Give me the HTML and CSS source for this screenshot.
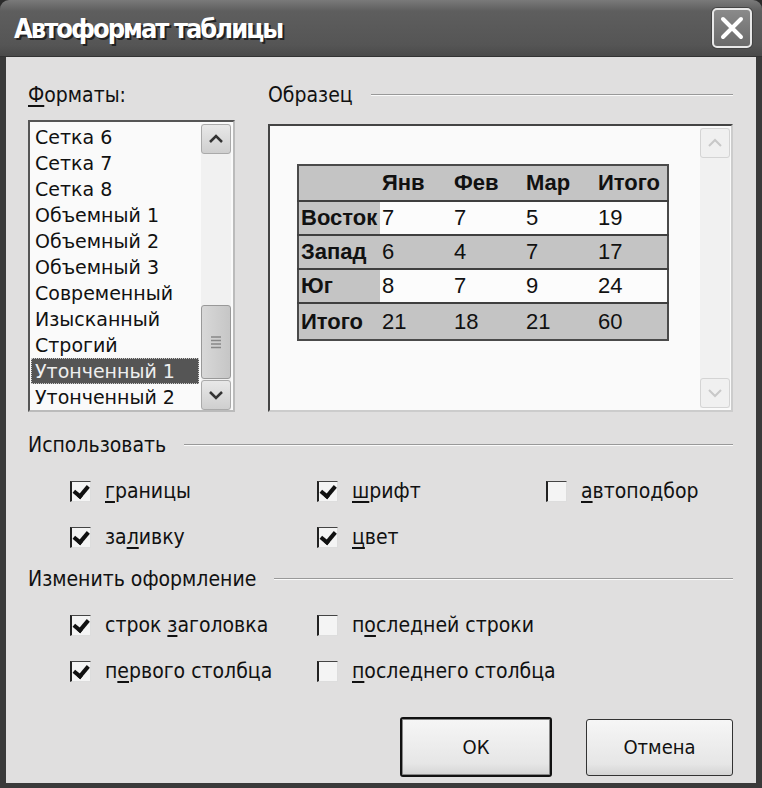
FILE: index.html
```html
<!DOCTYPE html>
<html lang="ru">
<head>
    <meta charset="UTF-8">
    <title>Автоформат таблицы</title>
    <link rel="stylesheet" href="styles.css">
</head>
<body>
    <div class="window">
        <div class="titlebar">
            <span class="title">Автоформат таблицы</span>
            <div class="close">
                <svg width="26" height="26" viewBox="0 0 26 26"><path d="M4 4 L22 22 M22 4 L4 22" stroke="#fff" stroke-width="4" stroke-linecap="round"/></svg>
            </div>
        </div>

        <div class="client">
            <div class="top">
                <div class="formats">
                    <div class="label"><u>Ф</u>орматы:</div>
                    <div class="listbox">
                        <ul class="items">
                            <li>Сетка 6</li>
                            <li>Сетка 7</li>
                            <li>Сетка 8</li>
                            <li>Объемный 1</li>
                            <li>Объемный 2</li>
                            <li>Объемный 3</li>
                            <li>Современный</li>
                            <li>Изысканный</li>
                            <li>Строгий</li>
                            <li class="selected">Утонченный 1</li>
                            <li>Утонченный 2</li>
                        </ul>
                        <div class="scrollbar">
                            <div class="arrow">
                                <svg width="26" height="26" viewBox="0 0 26 26"><path d="M7 16 L13 10 L19 16" fill="none" stroke="#333" stroke-width="2.5"/></svg>
                            </div>
                            <div class="track">
                                <div class="thumb">
                                    <svg width="12" height="14" viewBox="0 0 12 14"><path d="M1 2 H11 M1 5.5 H11 M1 9 H11 M1 12.5 H11" stroke="#888" stroke-width="1.5"/></svg>
                                </div>
                            </div>
                            <div class="arrow">
                                <svg width="26" height="26" viewBox="0 0 26 26"><path d="M7 10 L13 16 L19 10" fill="none" stroke="#333" stroke-width="2.5"/></svg>
                            </div>
                        </div>
                    </div>
                </div>

                <div class="sample">
                    <div class="legend"><span>Образец</span><div class="rule"></div></div>
                    <div class="preview">
                        <div class="preview-area">
                            <table class="demo">
                                <tr class="head"><td></td><td>Янв</td><td>Фев</td><td>Мар</td><td>Итого</td></tr>
                                <tr class="light"><td>Восток</td><td>7</td><td>7</td><td>5</td><td>19</td></tr>
                                <tr class="dark"><td>Запад</td><td>6</td><td>4</td><td>7</td><td>17</td></tr>
                                <tr class="light"><td>Юг</td><td>8</td><td>7</td><td>9</td><td>24</td></tr>
                                <tr class="dark total"><td>Итого</td><td>21</td><td>18</td><td>21</td><td>60</td></tr>
                            </table>
                        </div>
                        <div class="scrollbar disabled">
                            <div class="arrow">
                                <svg width="26" height="26" viewBox="0 0 26 26"><path d="M7 16 L13 10 L19 16" fill="none" stroke="#c8c8c8" stroke-width="2"/></svg>
                            </div>
                            <div class="track"></div>
                            <div class="arrow">
                                <svg width="26" height="26" viewBox="0 0 26 26"><path d="M7 10 L13 16 L19 10" fill="none" stroke="#c8c8c8" stroke-width="2"/></svg>
                            </div>
                        </div>
                    </div>
                </div>
            </div>

            <div class="group">
                <div class="legend"><span>Использовать</span><div class="rule"></div></div>
                <div class="checks three">
                    <label class="check"><span class="box on"></span><span><u>г</u>раницы</span></label>
                    <label class="check"><span class="box on"></span><span><u>ш</u>рифт</span></label>
                    <label class="check"><span class="box"></span><span><u>а</u>втоподбор</span></label>
                    <label class="check"><span class="box on"></span><span>за<u>л</u>ивку</span></label>
                    <label class="check"><span class="box on"></span><span><u>ц</u>вет</span></label>
                </div>
            </div>

            <div class="group">
                <div class="legend"><span>Изменить оформление</span><div class="rule"></div></div>
                <div class="checks two">
                    <label class="check"><span class="box on"></span><span>строк <u>з</u>аголовка</span></label>
                    <label class="check"><span class="box"></span><span>п<u>о</u>следней строки</span></label>
                    <label class="check"><span class="box on"></span><span>п<u>е</u>рвого столбца</span></label>
                    <label class="check"><span class="box"></span><span><u>п</u>оследнего столбца</span></label>
                </div>
            </div>

            <div class="buttons">
                <button class="btn default">ОК</button>
                <button class="btn">Отмена</button>
            </div>
        </div>
    </div>
</body>
</html>
```

FILE: styles.css
```css
/* Global reset */
* {
    margin: 0;
    padding: 0;
    box-sizing: border-box;
}

body {
    background: #2b2b2b;
    font-family: "DejaVu Sans Condensed", "DejaVu Sans", sans-serif;
    color: #111;
}

/* Window frame */
.window {
    width: 762px;
    height: 788px;
    display: flex;
    flex-direction: column;
}

.titlebar {
    height: 57px;
    background: linear-gradient(#7a7a7a, #5e5e5e 20%, #555 80%, #4a4a4a);
    border-radius: 9px 9px 0 0;
    border-bottom: 1px solid #333;
    display: flex;
    align-items: center;
    justify-content: space-between;
    padding: 0 10px 0 14px;
}

.title {
    font-family: "DejaVu Sans Condensed", "DejaVu Sans", sans-serif;
    font-weight: bold;
    font-size: 27px;
    color: #fff;
    text-shadow: 2px 2px 0 #222;
    letter-spacing: -2px;
}

.close {
    width: 40px;
    height: 40px;
    border: 2px solid #e8e8e8;
    border-radius: 5px;
    background: linear-gradient(#8a8a8a, #6a6a6a);
    display: flex;
    align-items: center;
    justify-content: center;
    box-shadow: 0 0 0 1px #444;
}

.client {
    flex: 1;
    background: #e0dfdf;
    border-left: 6px solid #3a3a3a;
    border-right: 6px solid #3a3a3a;
    border-bottom: 5px solid #3a3a3a;
    padding: 26px 23px 0 22px;
    font-size: 21px;
}

u {
    text-decoration-thickness: 2px;
    text-underline-offset: 3px;
}

/* Top area */
.top {
    display: grid;
    grid-template-columns: 207px 465px;
    column-gap: 33px;
}

.label {
    height: 24px;
    line-height: 24px;
}

.legend {
    display: flex;
    align-items: center;
    height: 24px;
    line-height: 24px;
}

.legend .rule {
    flex: 1;
    height: 2px;
    margin-left: 18px;
    border-top: 1px solid #999;
    border-bottom: 1px solid #fafafa;
}

/* Formats listbox */
.listbox {
    margin-top: 13px;
    height: 292px;
    background: #fafafa;
    border: 2px solid #555;
    border-right-color: #bbb;
    border-bottom-color: #bbb;
    display: flex;
    padding: 2px 2px 0 1px;
}

.items {
    list-style: none;
    flex: 1;
    font-family: "DejaVu Sans", sans-serif;
    font-size: 19px;
}

.items li {
    height: 26px;
    line-height: 26px;
    padding-left: 4px;
    white-space: nowrap;
}

.items li.selected {
    background: #555;
    color: #eee;
    outline: 1px dotted #ccc;
    outline-offset: -1px;
    margin-right: 2px;
}

.scrollbar {
    width: 30px;
    display: flex;
    flex-direction: column;
    background: #f1f1f1;
}

.scrollbar .arrow {
    height: 30px;
    border: 1px solid #aaa;
    border-radius: 3px;
    background: linear-gradient(#e8e8e8, #cfcfcf);
    display: flex;
    align-items: center;
    justify-content: center;
}

.scrollbar .track {
    flex: 1;
    display: flex;
    flex-direction: column;
    justify-content: flex-end;
    padding: 1px 0;
}

.thumb {
    height: 74px;
    border: 1px solid #999;
    border-radius: 3px;
    background: linear-gradient(90deg, #d8d8d8, #c6c6c6);
    display: flex;
    align-items: center;
    justify-content: center;
}

.scrollbar.disabled .arrow {
    background: #f0f0f0;
    border-color: #d4d4d4;
}

/* Sample preview */
.preview {
    margin-top: 17px;
    height: 288px;
    background: #fafafa;
    border: 2px solid #444;
    border-right-color: #ccc;
    border-bottom-color: #ccc;
    display: flex;
    padding: 2px 1px 2px 0;
}

.preview-area {
    flex: 1;
    padding: 36px 0 0 27px;
}

.demo {
    border-collapse: collapse;
    border: 2px solid #4a4a4a;
    font-family: "Liberation Sans", Arial, sans-serif;
    font-size: 22px;
}

.demo td {
    height: 34px;
    padding: 0 2px;
    border-top: 2px solid #3f3f3f;
    width: 72px;
    white-space: nowrap;
}

.demo td:first-child {
    width: 82px;
    font-weight: bold;
    background: #c4c4c4;
}

.demo tr.head td {
    height: 36px;
    font-weight: bold;
    background: #c4c4c4;
    border-top: none;
}

.demo tr.light td {
    background: #fcfcfc;
}

.demo tr.light td:first-child,
.demo tr.dark td {
    background: #c4c4c4;
}

.demo tr.total td {
    height: 37px;
}

/* Option groups */
.group {
    margin-top: 21px;
}

.group + .group {
    margin-top: 7px;
}

.checks {
    display: grid;
    grid-template-columns: 247px 229px auto;
    padding-left: 42px;
    margin-top: 11px;
}

.checks.two {
    grid-template-columns: 247px auto;
}

.check {
    height: 46px;
    display: flex;
    align-items: center;
    gap: 14px;
}

.box {
    width: 21px;
    height: 21px;
    background: #f4f4f4;
    border-left: 2px solid #222;
    border-top: 1px solid #444;
    border-right: 1px solid #ddd;
    border-bottom: 1px solid #ddd;
    position: relative;
}

.box.on::after {
    content: "";
    position: absolute;
    left: 3px;
    top: 1px;
    width: 6px;
    height: 11px;
    border-right: 4px solid #111;
    border-bottom: 4px solid #111;
    transform: rotate(40deg);
    transform-origin: 60% 60%;
}

/* Buttons */
.buttons {
    display: flex;
    justify-content: flex-end;
    align-items: center;
    gap: 34px;
    margin-top: 23px;
}

.btn {
    width: 147px;
    height: 57px;
    font-family: "DejaVu Sans Condensed", "DejaVu Sans", sans-serif;
    font-size: 20px;
    color: #111;
    background: linear-gradient(#f6f6f6, #e6e6e6 80%, #d4d4d4);
    border: 1px solid #333;
    border-radius: 3px;
}

.btn.default {
    width: 152px;
    height: 60px;
    border: 2px solid #111;
    box-shadow: inset 0 0 0 1px #888;
}
```
